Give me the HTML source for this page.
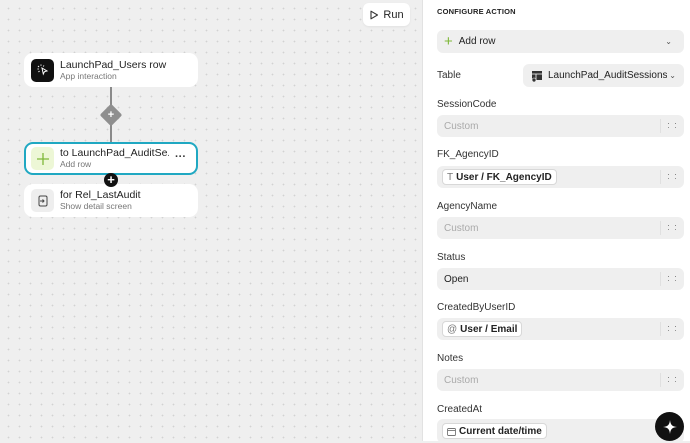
<!DOCTYPE html>
<html><head><meta charset="utf-8"><style>
*{box-sizing:border-box;margin:0;padding:0}
body{width:690px;height:441px;overflow:hidden;font-family:"Liberation Sans",sans-serif;background:#efefef;position:relative}
.canvas{position:absolute;left:0;top:0;width:422px;height:441px;background-color:#efefef;background-image:radial-gradient(#d2d2d2 0.7px,transparent 1px);background-size:11px 11px;background-position:3px 3px}
.run{position:absolute;left:363px;top:3px;width:47px;height:23px;background:#fff;border-radius:6px;font-size:11px;color:#222;display:flex;align-items:center;justify-content:center;gap:4px;box-shadow:0 1px 2px rgba(0,0,0,.06)}
.node{position:absolute;left:24px;width:174px;background:#fff;border-radius:9px;display:flex;align-items:center;padding-left:7px}
.node .ic{width:23px;height:23px;border-radius:5px;display:flex;align-items:center;justify-content:center;margin-right:6px;flex:none}
.node .tx{flex:1;min-width:0}
.node .t{font-size:10.5px;color:#222;line-height:12px;white-space:nowrap;overflow:hidden}
.node .s{font-size:8.5px;color:#777;line-height:11px;white-space:nowrap}
.panel{position:absolute;left:422px;top:0;width:268px;height:441px;background:#fff;border-left:1px solid #e2e2e2}
.h{position:absolute;left:14px;top:7px;font-size:7.5px;font-weight:bold;color:#222;letter-spacing:.2px}
.lab{position:absolute;left:14px;font-size:10px;color:#333}
.inp{position:absolute;left:14px;width:247px;height:22px;background:#efefef;border-radius:6px;font-size:10px;display:flex;align-items:center;padding-left:7px;color:#222}
.inp .ph{color:#aaa}
.inp .dd{position:absolute;right:0;top:4px;height:14px;width:24px;border-left:1px solid #e0e0e0;font-size:9px;color:#777;text-align:center;line-height:13px;letter-spacing:1px}
.chip{background:#fff;border:1px solid #d8d8d8;border-radius:4px;padding:1px 4px;font-weight:bold;font-size:10px;display:flex;align-items:center;gap:3px;height:16px;margin-left:-2px}
.chip i{font-style:normal;font-weight:normal;color:#777}
</style></head><body>
<div class="canvas"></div>
<div class="run"><svg width="10" height="10" viewBox="0 0 10 10"><path d="M2 1.2 L8.5 5 L2 8.8 Z" fill="none" stroke="#333" stroke-width="1.1" stroke-linejoin="round"/></svg>Run</div>

<div style="position:absolute;left:110px;top:87px;width:2px;height:55px;background:#8a8a8a"></div>
<div style="position:absolute;left:103px;top:107px;width:16px;height:16px;background:#8f8f8f;transform:rotate(45deg);border-radius:2px"></div>
<div style="position:absolute;left:103px;top:108px;width:16px;text-align:center;color:#fff;font-size:11px;font-weight:bold;line-height:14px">+</div>

<div class="node" style="top:53px;height:34px"><div class="ic" style="background:#111"><svg width="14" height="14" viewBox="0 0 14 14"><path d="M6 5 L11 8 L8.5 8.7 L7.3 11 Z" fill="none" stroke="#fff" stroke-width="1"/><path d="M5 1.5v1.3M2 3l1 1M1.5 6h1.3M2.5 9l1-1M8 2.5l-.8 1" stroke="#fff" stroke-width="1"/></svg></div><div class="tx"><div class="t">LaunchPad_Users row</div><div class="s">App interaction</div></div></div>

<div class="node" style="top:142px;height:33px;border:2px solid #20a8c2;padding-left:5px"><div class="ic" style="background:#edf7d6"><svg width="14" height="14" viewBox="0 0 14 14"><path d="M7 1v12M1 7h12" stroke="#7fb83a" stroke-width="1.3"/></svg></div><div class="tx"><div class="t">to LaunchPad_AuditSe...</div><div class="s">Add row</div></div><div style="font-size:11px;color:#333;margin:0 10px 4px 6px;font-weight:bold;flex:none">···</div></div>
<div style="position:absolute;left:104px;top:173px;width:14px;height:14px;border-radius:7px;background:#111;color:#fff;font-size:13px;font-weight:bold;text-align:center;line-height:13px;z-index:3">+</div>

<div class="node" style="top:184px;height:33px"><div class="ic" style="background:#eee"><svg width="12" height="12" viewBox="0 0 12 12"><rect x="2" y="1" width="8" height="10" rx="1.5" fill="none" stroke="#444" stroke-width="1"/><path d="M3 6h4M5.5 4.5L7 6 5.5 7.5" fill="none" stroke="#444" stroke-width="1"/></svg></div><div class="tx"><div class="t">for Rel_LastAudit</div><div class="s">Show detail screen</div></div></div>

<div class="panel">
<div class="h">CONFIGURE ACTION</div>
<div class="inp" style="top:30px;height:23px"><span style="color:#7fb83a;font-size:15px;margin-right:6px;line-height:10px">+</span>Add row<span style="position:absolute;right:12px;font-size:8px;color:#555">&#8964;</span></div>
<div class="lab" style="top:70px">Table</div>
<div class="inp" style="top:64px;left:100px;width:161px;height:23px;padding-left:8px;overflow:hidden;white-space:nowrap"><svg width="12" height="12" viewBox="0 0 12 12" style="margin-right:5px;flex:none"><rect x="1" y="1" width="10" height="9" fill="#333"/><path d="M1 4h10M5 4v6" stroke="#fff" stroke-width=".8"/><circle cx="3" cy="10" r="2" fill="#333" stroke="#fff" stroke-width=".6"/></svg>LaunchPad_AuditSessions<span style="position:absolute;right:0;padding:0 8px 0 2px;font-size:8px;color:#555;background:#efefef">&#8964;</span></div>

<div class="lab" style="top:99px">SessionCode</div>
<div class="inp" style="top:115px"><span class="ph">Custom</span><div class="dd">: :</div></div>
<div class="lab" style="top:149px">FK_AgencyID</div>
<div class="inp" style="top:166px"><span class="chip"><i>T</i>User / FK_AgencyID</span><div class="dd">: :</div></div>
<div class="lab" style="top:201px">AgencyName</div>
<div class="inp" style="top:217px"><span class="ph">Custom</span><div class="dd">: :</div></div>
<div class="lab" style="top:252px">Status</div>
<div class="inp" style="top:268px">Open<div class="dd">: :</div></div>
<div class="lab" style="top:302px">CreatedByUserID</div>
<div class="inp" style="top:318px"><span class="chip"><i>@</i>User / Email</span><div class="dd">: :</div></div>
<div class="lab" style="top:353px">Notes</div>
<div class="inp" style="top:369px"><span class="ph">Custom</span><div class="dd">: :</div></div>
<div class="lab" style="top:404px">CreatedAt</div>
<div class="inp" style="top:419px;height:24px"><span class="chip"><svg width="9" height="9" viewBox="0 0 9 9"><rect x=".5" y="1.5" width="8" height="7" rx="1" fill="none" stroke="#777" stroke-width=".9"/><path d="M.5 3.5h8" stroke="#777" stroke-width=".9"/></svg>Current date/time</span></div>
<div style="position:absolute;left:232px;top:412px;width:29px;height:29px;border-radius:15px;background:#111;display:flex;align-items:center;justify-content:center"><svg width="14" height="14" viewBox="0 0 14 14"><path d="M7 0 C7.6 5 9 6.4 14 7 C9 7.6 7.6 9 7 14 C6.4 9 5 7.6 0 7 C5 6.4 6.4 5 7 0Z" fill="#fff"/></svg></div>
</div>
</body></html>
